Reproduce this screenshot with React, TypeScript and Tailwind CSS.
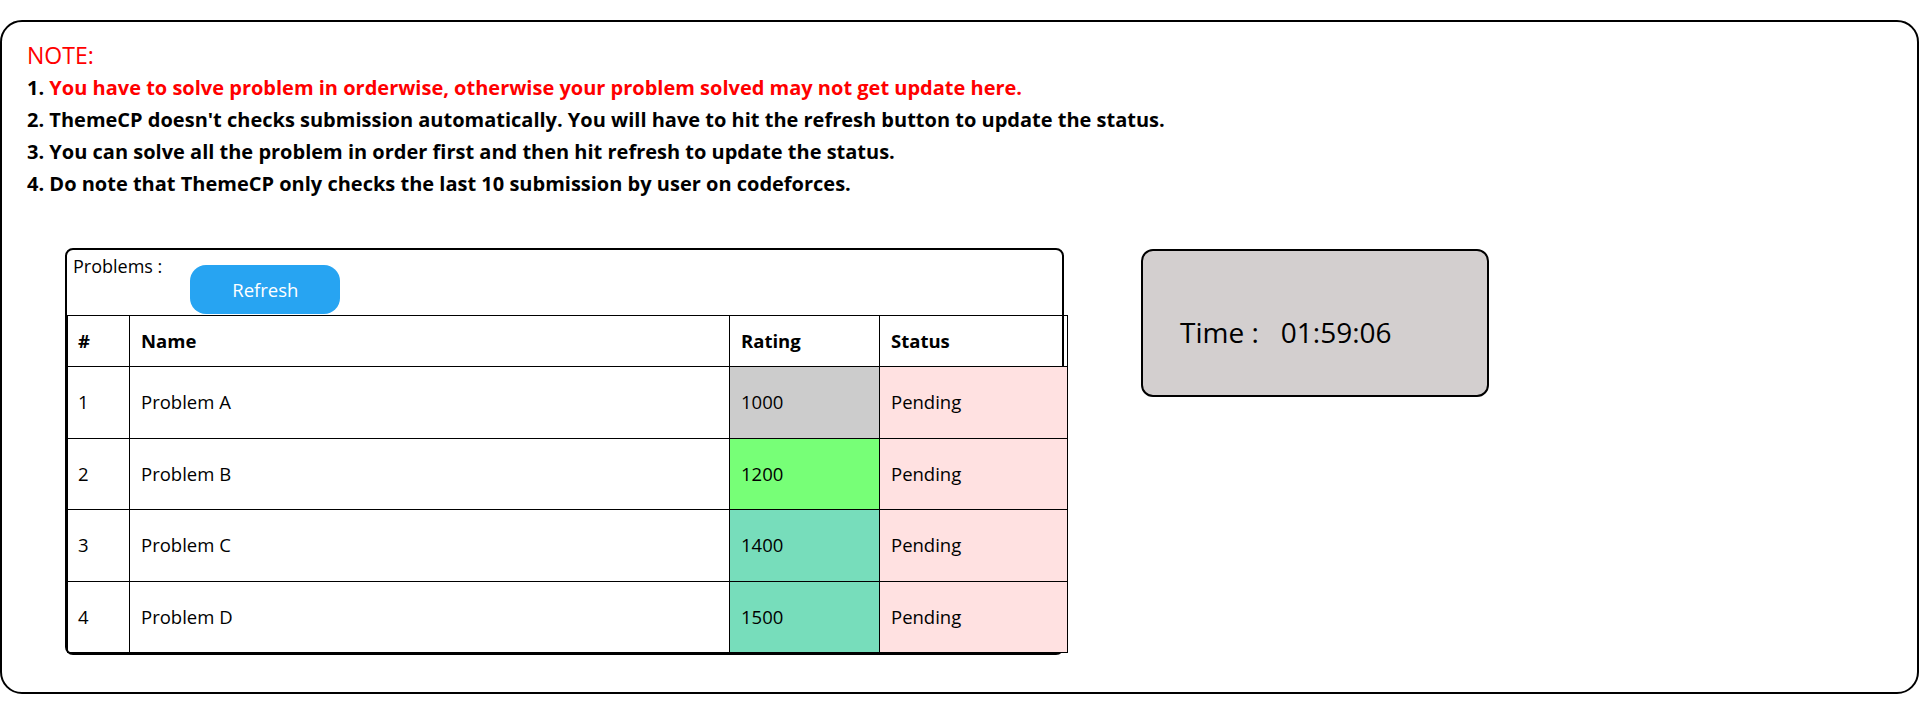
import React from "react";

const font = { fontFamily: '"Open Sans", "Noto Sans", sans-serif' };

const rows = [
  { n: 1, name: "Problem A", rating: 1000, bg: "bg-[#cccccc]" },
  { n: 2, name: "Problem B", rating: 1200, bg: "bg-[#77ff77]" },
  { n: 3, name: "Problem C", rating: 1400, bg: "bg-[#77ddbb]" },
  { n: 4, name: "Problem D", rating: 1500, bg: "bg-[#77ddbb]" },
];

export default function App() {
  return (
    <div className="w-[1919px] h-[704px] bg-white pt-[20px] text-black" style={font}>
      <div className="h-[674px] w-full border-2 border-black rounded-[22px]">
        <div className="pl-[25px] pt-[16px]">
          <div className="text-[23px] leading-[34px] text-[#ff0000]">NOTE:</div>
          <div className="text-[20px] leading-[32px] font-bold">
            1. <span className="text-[#ff0000]">You have to solve problem in orderwise, otherwise your problem solved may not get update here.</span>
          </div>
          <div className="text-[20px] leading-[32px] font-bold">
            2. ThemeCP doesn't checks submission automatically. You will have to hit the refresh button to update the status.
          </div>
          <div className="text-[20px] leading-[32px] font-bold">
            3. You can solve all the problem in order first and then hit refresh to update the status.
          </div>
          <div className="text-[20px] leading-[32px] font-bold">
            4. Do note that ThemeCP only checks the last 10 submission by user on codeforces.
          </div>
        </div>

        <div className="flex items-start pl-[63px] mt-[48px]">
          <div className="w-[999px] border-2 border-black rounded-[8px]">
            <div className="h-[65px] flex items-start">
              <span className="text-[18px] leading-[24px] pl-[6px] pt-[4px]">Problems :</span>
              <button className="ml-[28px] mt-[15px] w-[150px] h-[49px] rounded-[16px] bg-[#27a4f2] text-white text-[18.5px] flex items-center justify-center">
                Refresh
              </button>
            </div>
            <table className="w-[1000px] border-collapse text-[18.5px] table-fixed">
              <colgroup>
                <col className="w-[62px]" />
                <col className="w-[600px]" />
                <col className="w-[150px]" />
                <col className="w-[188px]" />
              </colgroup>
              <thead>
                <tr className="h-[51px]">
                  <th className="border border-black text-left font-bold pl-[10px]">#</th>
                  <th className="border border-black text-left font-bold pl-[11px]">Name</th>
                  <th className="border border-black text-left font-bold pl-[11px]">Rating</th>
                  <th className="border border-black text-left font-bold pl-[11px]">Status</th>
                </tr>
              </thead>
              <tbody>
                {rows.map((r) => (
                  <tr key={r.n} className="h-[71.5px]">
                    <td className="border border-black pl-[10px]">{r.n}</td>
                    <td className="border border-black pl-[11px]">{r.name}</td>
                    <td className={`border border-black pl-[11px] ${r.bg}`}>{r.rating}</td>
                    <td className="border border-black pl-[11px] bg-[#ffe1e1]">Pending</td>
                  </tr>
                ))}
              </tbody>
            </table>
          </div>

          <div className="ml-[77px] mt-[1px] w-[348px] h-[148px] border-2 border-black rounded-[12px] bg-[#d3cfcf] pl-[37px] pt-[62px]">
            <div className="text-[28px] leading-[38px] flex">
              <span>Time :</span>
              <span className="ml-[22px]">01:59:06</span>
            </div>
          </div>
        </div>
      </div>
    </div>
  );
}
